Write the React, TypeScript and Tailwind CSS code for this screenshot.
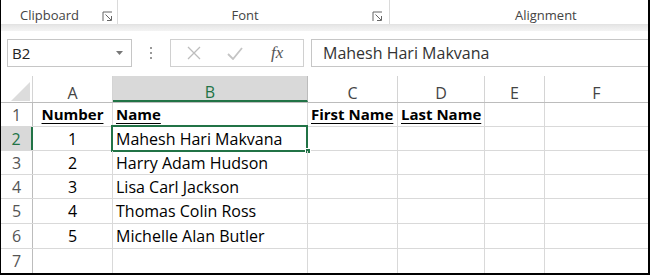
import React from 'react';

const cols = [
  { key: 'A', w: 'w-[80px]' },
  { key: 'B', w: 'w-[195px]' },
  { key: 'C', w: 'w-[90px]' },
  { key: 'D', w: 'w-[87px]' },
  { key: 'E', w: 'w-[60px]' },
];

const rows = [
  { n: 1, h: 'h-[24px]', cells: ['Number', 'Name', 'First Name', 'Last Name'], head: true },
  { n: 2, h: 'h-[24px]', cells: ['1', 'Mahesh Hari Makvana'] },
  { n: 3, h: 'h-[24px]', cells: ['2', 'Harry Adam Hudson'] },
  { n: 4, h: 'h-[24px]', cells: ['3', 'Lisa Carl Jackson'] },
  { n: 5, h: 'h-[25px]', cells: ['4', 'Thomas Colin Ross'] },
  { n: 6, h: 'h-[25px]', cells: ['5', 'Michelle Alan Butler'] },
  { n: 7, h: 'flex-1', cells: [] },
];

function Launcher() {
  return (
    <svg width="11" height="11" viewBox="0 0 11 11" className="text-[#666]">
      <path d="M1 10V1h9" fill="none" stroke="currentColor" strokeWidth="1" />
      <path d="M3.5 3.5l5.5 5.5" fill="none" stroke="currentColor" strokeWidth="1" />
      <path d="M5 9.5h4.5V5" fill="none" stroke="currentColor" strokeWidth="1" />
    </svg>
  );
}

export default function App() {
  return (
    <div className="w-[650px] h-[275px] bg-white border-l border-r-2 border-b-2 border-black overflow-hidden flex flex-col font-['Open_Sans',sans-serif]">
      {/* Ribbon group labels */}
      <div className="h-[25px] flex text-[13px] text-[#444] border-b border-[#e3e3e3]">
        <div className="w-[117px] flex items-center border-r border-[#dadada] pt-[8px] pl-[19px] pr-[4px] justify-between">
          <span>Clipboard</span>
          <Launcher />
        </div>
        <div className="w-[272px] flex items-center border-r border-[#dadada] pt-[8px] pr-[6px]">
          <span className="flex-1 text-center">Font</span>
          <Launcher />
        </div>
        <div className="flex-1 flex items-center pt-[8px] pl-[125px]">
          <span>Alignment</span>
        </div>
      </div>
      <div className="h-[6px] bg-gradient-to-b from-[#e6e6e6] to-[#f4f4f4]" />

      {/* Formula bar */}
      <div className="mt-[8px] h-[28px] flex items-stretch">
        <div className="ml-[6px] w-[125px] border border-[#c6c6c6] flex items-center justify-between pl-[4px] pr-[8px] text-[15px] text-[#222]">
          <span>B2</span>
          <svg width="7" height="4" viewBox="0 0 7 4">
            <path d="M0 0h7L3.5 4z" fill="#777" />
          </svg>
        </div>
        <div className="w-[38px] flex flex-col items-center justify-center gap-[3px]">
          <span className="w-[2px] h-[2px] bg-[#999]" />
          <span className="w-[2px] h-[2px] bg-[#999]" />
          <span className="w-[2px] h-[2px] bg-[#999]" />
        </div>
        <div className="w-[134px] border border-[#d0d0d0] flex items-center">
          <svg width="14" height="14" viewBox="0 0 14 14" className="ml-[16px]">
            <path d="M1 1l12 12M13 1L1 13" stroke="#bdbdbd" strokeWidth="1.3" fill="none" />
          </svg>
          <svg width="16" height="13" viewBox="0 0 16 13" className="ml-[26px]">
            <path d="M1 7l5 5L15 1" stroke="#c4c4c4" strokeWidth="1.8" fill="none" />
          </svg>
          <span className="ml-[28px] font-['Liberation_Serif',serif] italic text-[17px] text-[#555]">fx</span>
        </div>
        <div className="ml-[7px] flex-1 border-t border-b border-l border-[#c6c6c6] flex items-center pl-[11px] text-[16px] text-[#333]">
          Mahesh Hari Makvana
        </div>
      </div>

      {/* Grid */}
      <div className="mt-[9px] flex-1 flex flex-col text-[16px] text-black">
        {/* column headers */}
        <div className="h-[27px] flex border-b border-[#bcbcbc] text-[#444] leading-[16px]">
          <div className="w-[32px] border-r border-[#d4d4d4] relative">
            <svg width="19" height="19" viewBox="0 0 19 19" className="absolute right-[2px] bottom-[1px]">
              <path d="M19 0V19H0z" fill="#dcdcdc" />
            </svg>
          </div>
          {cols.map((c) => (
            <div
              key={c.key}
              className={`${c.w} flex items-end justify-center ${
                c.key === 'B'
                  ? 'bg-[#d9d9d9] border-b-2 border-[#217346] text-[#217346] border-r border-r-[#bcbcbc]'
                  : 'border-r border-[#d4d4d4] pb-[1px]'
              }`}
            >
              {c.key}
            </div>
          ))}
          <div className="flex-1 flex items-end justify-center pb-[1px]">F</div>
        </div>

        {rows.map((r) => (
          <div key={r.n} className={`${r.h} flex ${r.n === 7 ? '' : 'border-b border-[#d9d9d9]'}`}>
            <div
              className={`w-[32px] flex items-center justify-center ${
                r.n === 2
                  ? 'bg-[#d9d9d9] border-r-2 border-[#217346] text-[#217346]'
                  : 'border-r border-[#bcbcbc] text-[#555]'
              }`}
            >
              {r.n}
            </div>
            {cols.map((c, i) => {
              const v = r.cells[i];
              const selected = r.n === 2 && c.key === 'B';
              return (
                <div
                  key={c.key}
                  className={`${c.w} border-r border-[#d9d9d9] flex items-center relative ${
                    i === 0 ? 'justify-center' : 'pl-[3px]'
                  } ${r.head ? 'font-bold underline underline-offset-[3px] text-[15px]' : ''} whitespace-nowrap`}
                >
                  {v}
                  {selected && (
                    <>
                      <div className="absolute -left-[2px] -top-[2px] -right-[1px] -bottom-[2px] border-2 border-[#217346] pointer-events-none" />
                      <div className="absolute -right-[4px] -bottom-[4px] w-[6px] h-[6px] bg-[#217346] border border-white" />
                    </>
                  )}
                </div>
              );
            })}
            <div className="flex-1" />
          </div>
        ))}
      </div>
    </div>
  );
}
